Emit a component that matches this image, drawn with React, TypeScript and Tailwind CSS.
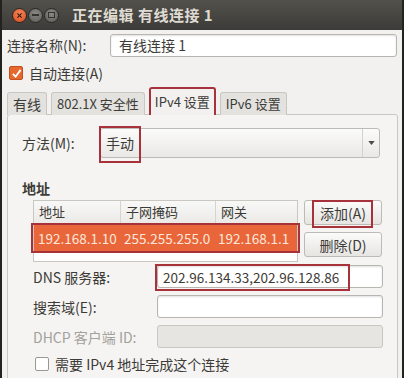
/** @file Ubuntu NetworkManager "editing wired connection" dialog, IPv4 tab. */

function Check({ checked }: { checked: boolean }) {
  if (!checked) {
    return <span className="h-[14px] w-[14px] shrink-0 rounded-[2px] border border-[#9a9893] bg-white" />
  }
  return (
    <span className="flex h-[14px] w-[14px] shrink-0 items-center justify-center rounded-[2px] border border-[#c4501f] bg-[#e5692f]">
      <svg viewBox="0 0 12 12" className="h-[11px] w-[11px]">
        <path d="M2 6.5 L5 9.5 L10.5 2" fill="none" stroke="#fff" strokeWidth="2" />
      </svg>
    </span>
  )
}

function WinButton({ kind }: { kind: 'close' | 'min' | 'max' }) {
  const bg =
    kind === 'close'
      ? 'bg-[radial-gradient(circle_at_50%_35%,#f5885a,#d9481c)] border-[#2a2926]'
      : 'bg-[radial-gradient(circle_at_50%_35%,#8a8984,#5b5a55)] border-[#2a2926]'
  return (
    <span className={`flex h-[15px] w-[15px] items-center justify-center rounded-full border ${bg}`}>
      {kind === 'close' && (
        <svg viewBox="0 0 10 10" className="h-[7px] w-[7px]">
          <path d="M2 2 L8 8 M8 2 L2 8" stroke="#3b1a0c" strokeWidth="1.8" />
        </svg>
      )}
      {kind === 'min' && <span className="h-[2px] w-[7px] bg-[#34332f]" />}
      {kind === 'max' && <span className="h-[6px] w-[7px] border border-[#34332f]" />}
    </span>
  )
}

function Mark({ className }: { className: string }) {
  return <span className={`pointer-events-none absolute border-2 border-[#a8323a] ${className}`} />
}

const field =
  'h-[23px] rounded-[3px] border border-[#b7b5b0] bg-white shadow-[inset_0_1px_2px_rgba(0,0,0,0.12)]'

const tab =
  'flex h-[23px] items-center rounded-t-[3px] border border-b-0 border-[#c9c7c2] bg-[#e3e2df] px-[5px]'

export default function App() {
  return (
    <div
      className="h-[378px] w-[404px] overflow-hidden border-x-2 border-[#23221f] bg-[#f2f1f0] text-[14px] leading-[20px] text-[#3c3b37]"
      style={{ fontFamily: '"Noto Sans CJK SC", "Noto Sans", sans-serif' }}
    >
      {/* title bar */}
      <div className="flex h-[30px] items-center bg-gradient-to-b from-[#52514c] to-[#3c3b37] pl-[10px]">
        <div className="flex items-center gap-[1px]">
          <WinButton kind="close" />
          <WinButton kind="min" />
          <WinButton kind="max" />
        </div>
        <span className="ml-[13px] text-[15px] font-bold tracking-[0.5px] text-[#dfdbd2]">正在编辑 有线连接 1</span>
      </div>

      <div className="px-[5px]">
        {/* connection name */}
        <div className="mt-[3px] flex h-[24px] items-center">
          <span className="w-[103px]">连接名称(N):</span>
          <div className={`${field} flex w-[287px] items-center px-[8px]`}>有线连接 1</div>
        </div>

        {/* auto connect */}
        <div className="mt-[8px] flex h-[16px] items-center gap-[6px] pl-[2px]">
          <Check checked />
          <span>自动连接(A)</span>
        </div>

        {/* tabs */}
        <div className="mt-[7px] flex h-[27px] items-end gap-[4px] text-[13px]">
          <div className={`${tab} text-[14px]`}>有线</div>
          <div className={tab}>802.1X 安全性</div>
          <div className="relative z-10 flex h-[28px] items-center rounded-t-[3px] border-2 border-b-0 border-[#a8323a] bg-[#f2f1f0] px-[4px]">IPv4 设置</div>
          <div className={tab}>IPv6 设置</div>
        </div>

        {/* IPv4 panel */}
        <div className="-mt-[1px] h-[270px] w-[391px] rounded-[3px] border border-[#c9c7c2] bg-[#f5f4f2]">
          {/* method */}
          <div className="mt-[13px] flex h-[30px] items-center pl-[14px]">
            <span className="w-[78px]">方法(M):</span>
            <div className="relative flex h-[30px] w-[280px] items-center rounded-[3px] border border-[#bdbbb6] bg-gradient-to-b from-[#fbfbfa] to-[#e9e8e5]">
              <span className="flex-1 pl-[5px]">手动</span>
              <span className="flex h-full w-[17px] items-center justify-center border-l border-[#d3d1cc]">
                <svg viewBox="0 0 8 5" className="h-[4px] w-[7px]">
                  <path d="M0 0 H8 L4 5 Z" fill="#4c4b47" />
                </svg>
              </span>
              <Mark className="-left-[2px] -top-[3px] h-[37px] w-[42px]" />
            </div>
          </div>

          {/* address heading */}
          <div className="mt-[20px] pl-[14px] font-bold">地址</div>

          {/* address table + buttons */}
          <div className="mt-[2px] flex gap-[6px] pl-[25px]">
            <div className="relative h-[62px] w-[265px] border border-[#c9c7c2] bg-white text-[13px]">
              <div className="grid h-[23px] grid-cols-[87px_95px_1fr] border-b border-[#d6d4cf] bg-gradient-to-b from-[#f8f8f7] to-[#ebeae7]">
                <span className="flex items-center border-r border-[#d6d4cf] pl-[5px]">地址</span>
                <span className="flex items-center border-r border-[#d6d4cf] pl-[5px]">子网掩码</span>
                <span className="flex items-center pl-[5px]">网关</span>
              </div>
              <div className="grid h-[27px] grid-cols-[87px_95px_1fr] bg-[#e8663a] text-[13.5px] text-[#fde6da]">
                <span className="flex items-center pl-[4px]">192.168.1.10</span>
                <span className="flex items-center pl-[3px]">255.255.255.0</span>
                <span className="flex items-center pl-[2px]">192.168.1.1</span>
              </div>
              <Mark className="-left-[3px] top-[22px] h-[30px] w-[269px]" />
            </div>
            <div className="flex flex-col gap-[7px]">
              <div className="relative flex h-[25px] w-[78px] items-center justify-center rounded-[3px] border border-[#bdbbb6] bg-gradient-to-b from-[#fbfbfa] to-[#e6e5e2]">
                添加(A)
                <Mark className="left-[7px] -top-[1px] h-[28px] w-[61px]" />
              </div>
              <div className="flex h-[25px] w-[78px] items-center justify-center rounded-[3px] border border-[#bdbbb6] bg-gradient-to-b from-[#fbfbfa] to-[#e6e5e2]">
                删除(D)
              </div>
            </div>
          </div>

          {/* dns / search / dhcp */}
          <div className="mt-[3px] grid grid-cols-[124px_226px] gap-y-[7px] pl-[25px]">
            <span className="flex items-center">DNS 服务器:</span>
            <div className={`${field} relative flex items-center px-[5px] text-[13.5px]`}>
              202.96.134.33,202.96.128.86
              <Mark className="-left-[3px] -top-[2px] h-[27px] w-[195px]" />
            </div>
            <span className="flex items-center">搜索域(E):</span>
            <div className={field} />
            <span className="flex items-center text-[#a3a19c]">DHCP 客户端 ID:</span>
            <div className="h-[23px] rounded-[3px] border border-[#c9c7c2] bg-[#e6e5e2]" />
          </div>

          {/* require ipv4 */}
          <div className="mt-[6px] flex items-center gap-[6px] pl-[27px]">
            <Check checked={false} />
            <span>需要 IPv4 地址完成这个连接</span>
          </div>
        </div>
      </div>
    </div>
  )
}
